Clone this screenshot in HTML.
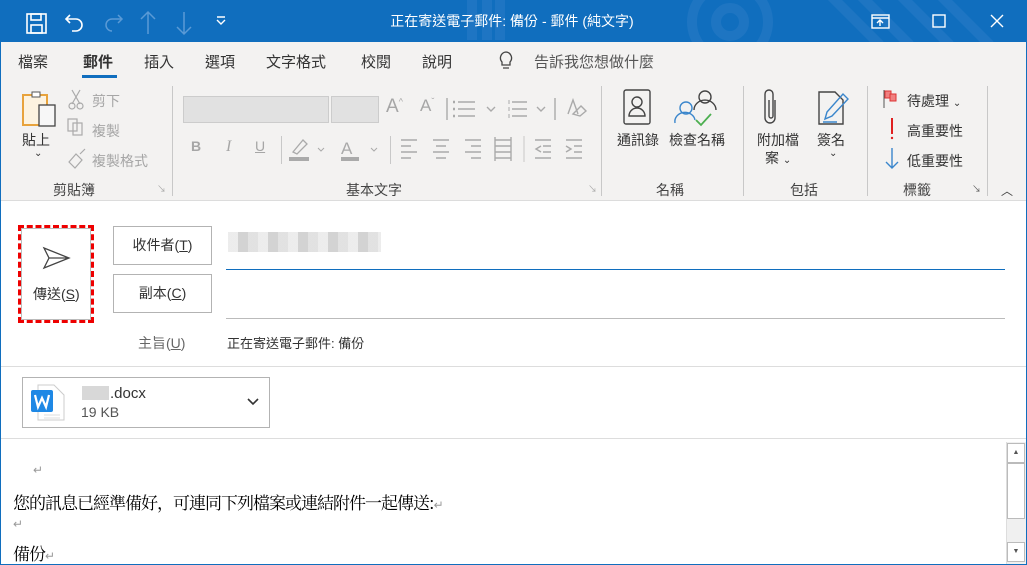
<!DOCTYPE html>
<html><head><meta charset="utf-8"><style>
*{margin:0;padding:0;box-sizing:border-box}
body{width:1027px;height:565px;overflow:hidden;background:#fff;font-family:"Liberation Sans","Noto Sans CJK TC",sans-serif;position:relative;color:#262626}
.a{position:absolute;white-space:nowrap}
#title{left:0;top:0;width:1027px;height:42px;background:#106ebe}
#frame{left:0;top:42px;width:1027px;height:523px;border:1px solid #106ebe;border-top:none}
#ribbon{left:1px;top:42px;width:1025px;height:159px;background:#f3f2f1;border-bottom:1px solid #dcdcdc}
.t{font-size:15px;color:#333}
.g{font-size:14px;color:#a6a6a6}
.d{font-size:14px;color:#333}
.lbl{font-size:14px;color:#444}
.sep{position:absolute;width:1px;background:#c8c8c8}
.box{position:absolute;border:1px solid #b3b3b3;background:#fff;font-size:14px;color:#333;text-align:center}
</style></head><body>
<div class="a" id="title"></div>
<svg class="a" style="left:0;top:0" width="1027" height="42">
<g stroke="#2a7cc6" stroke-width="10" fill="none" opacity=".55">
<circle cx="730" cy="22" r="14"/><circle cx="730" cy="22" r="38"/>
<path d="M830 -5 L880 45 M860 -5 L910 45 M900 -5 L950 45 M940 -5 L990 45"/>
<path d="M472 0 V40 M487 0 V40 M500 0 V40"/>
</g>
<g stroke="#fff" stroke-width="1.6" fill="none">
<rect x="27" y="14" width="19" height="19"/><rect x="31" y="14" width="10" height="6"/><rect x="31" y="25" width="11" height="8"/>
<path d="M70 15 L66 19 L70 23 M66 19 H76 A6 6 0 0 1 76 31 H72"/>
</g>
<g stroke="#5a9ad6" stroke-width="1.5" fill="none">
<path d="M118 15 L122 19 L118 23 M122 19 H112 A6 6 0 0 0 112 31"/>
<path d="M148 12 V34 M141 19 L148 12 L155 19"/><path d="M184 12 V34 M177 27 L184 34 L191 27"/>
</g>
<path d="M217 20 L221 24 L225 20 M217 17 H225" stroke="#fff" stroke-width="1.4" fill="none"/>
<g stroke="#fff" stroke-width="1.4" fill="none">
<rect x="872" y="15" width="17" height="13"/><path d="M872 18 H889 M880 26 V20 M877 23 L880 20 L883 23"/>
<rect x="933" y="15" width="12" height="12"/>
<path d="M991 15 L1003 27 M1003 15 L991 27"/>
</g>
<text x="512" y="26" fill="#fff" font-size="14" text-anchor="middle" font-family="Liberation Sans,Noto Sans CJK TC,sans-serif">正在寄送電子郵件: 備份  -  郵件 (純文字)</text>
</svg>
<div class="a" id="frame"></div>
<div class="a" id="ribbon"></div>
<div class="a t" style="left:18px;top:51px">檔案</div>
<div class="a t" style="left:83px;top:51px;font-weight:bold">郵件</div>
<div class="a" style="left:82px;top:75px;width:35px;height:3px;background:#106ebe"></div>
<div class="a t" style="left:144px;top:51px">插入</div>
<div class="a t" style="left:205px;top:51px">選項</div>
<div class="a t" style="left:266px;top:51px">文字格式</div>
<div class="a t" style="left:361px;top:51px">校閱</div>
<div class="a t" style="left:422px;top:51px">說明</div>
<svg class="a" style="left:498px;top:50px" width="16" height="22"><path d="M8 2 A6 6 0 0 1 12 12 V15 H4 V12 A6 6 0 0 1 8 2 Z M5 18 H11" stroke="#444" stroke-width="1.3" fill="none"/></svg>
<div class="a t" style="left:534px;top:51px;color:#555">告訴我您想做什麼</div>

<!-- clipboard -->
<svg class="a" style="left:20px;top:88px" width="40" height="40"><rect x="3" y="7" width="24" height="30" fill="#fdf3e0" stroke="#e8a33c" stroke-width="2"/><rect x="12" y="4" width="8" height="5" fill="#fff" stroke="#555"/><rect x="19" y="17" width="16" height="21" fill="#f7f7f7" stroke="#444" stroke-width="1.3"/></svg>
<div class="a d" style="left:22px;top:130px">貼上</div>
<div class="a d" style="left:34px;top:148px;font-size:10px">⌄</div>
<div class="a g" style="left:92px;top:91px">剪下</div>
<div class="a g" style="left:92px;top:121px">複製</div>
<div class="a g" style="left:92px;top:151px">複製格式</div>
<svg class="a" style="left:66px;top:88px" width="24" height="84" stroke="#aaa" fill="none" stroke-width="1.2"><path d="M6 2 L14 16 M14 2 L6 16"/><circle cx="6" cy="18" r="3"/><circle cx="14" cy="18" r="3"/><rect x="2" y="31" width="9" height="12"/><rect x="7" y="35" width="9" height="12"/><path d="M3 74 L10 66 L16 72 L9 80 Z M14 66 L19 61"/></svg>
<div class="a lbl" style="left:53px;top:180px">剪貼簿</div>
<div class="a g" style="left:157px;top:182px;font-size:9px">↘</div>
<div class="sep" style="left:172px;top:86px;height:110px"></div>

<!-- basic text -->
<div class="a" style="left:183px;top:96px;width:146px;height:27px;background:#e1e1e1;border:1px solid #ccc"></div>
<div class="a" style="left:331px;top:96px;width:48px;height:27px;background:#e1e1e1;border:1px solid #ccc"></div>
<div class="a g" style="left:386px;top:96px;font-size:19px">A<sup style="font-size:9px">^</sup></div>
<div class="a g" style="left:420px;top:96px;font-size:17px">A<sup style="font-size:9px">ˇ</sup></div>
<svg class="a" style="left:440px;top:88px" width="160" height="80" stroke="#aaa" fill="none" stroke-width="1.4">
<path d="M7 10 V32"/>
<path d="M18 14 H35 M18 21 H35 M18 28 H35" /><path d="M13 14 H15 M13 21 H15 M13 28 H15" stroke-width="2.5"/>
<path d="M47 19 L51 23 L55 19"/>
<path d="M72 14 H87 M72 21 H87 M72 28 H87"/><path d="M69 12 V16 M69 19 V23 M69 26 V30" stroke-width="1"/>
<path d="M97 19 L101 23 L105 19"/>
<path d="M115 10 V32"/>
<path d="M128 26 L133 12 L138 26 M133 26 L141 18 L146 23 L140 28 Z"/>
<path d="M-36 58 H-20 M-36 64 H-26 M-36 70 H-20 M-36 76 H-26" transform="translate(0,0)"/>
</svg>
<div class="a g" style="left:191px;top:138px;font-weight:bold">B</div>
<div class="a g" style="left:226px;top:138px;font-style:italic;font-family:'Liberation Serif',serif;font-size:16px">I</div>
<div class="a g" style="left:255px;top:138px;text-decoration:underline">U</div>
<div class="sep" style="left:281px;top:136px;height:28px"></div>
<svg class="a" style="left:289px;top:136px" width="100" height="26"><path d="M4 16 L14 4 L18 8 L8 18 Z" stroke="#aaa" fill="none" stroke-width="1.3"/><rect x="0" y="21" width="20" height="4" fill="#aaa"/><path d="M29 12 L32 15 L35 12" stroke="#aaa" fill="none"/><text x="52" y="18" font-size="17" fill="#aaa" font-family="Liberation Sans">A</text><rect x="52" y="21" width="18" height="4" fill="#aaa"/><path d="M82 12 L85 15 L88 12" stroke="#aaa" fill="none"/></svg>
<div class="sep" style="left:390px;top:136px;height:28px"></div>
<svg class="a" style="left:395px;top:134px" width="200" height="28" stroke="#aaa" fill="none" stroke-width="1.4">
<path d="M6 6 H22 M6 12 H16 M6 18 H22 M6 24 H16"/>
<path d="M38 6 H54 M41 12 H51 M38 18 H54 M41 24 H51"/>
<path d="M70 6 H86 M76 12 H86 M70 18 H86 M76 24 H86"/>
<path d="M100 6 H116 M100 12 H116 M100 18 H116 M100 24 H116 M100 3 V27 M116 3 V27"/>
<path d="M129 2 V28" stroke="#c8c8c8" stroke-width="1"/>
<path d="M140 6 H156 M148 12 H156 M148 18 H156 M140 24 H156 M146 12 L141 15 L146 18"/>
<path d="M171 6 H187 M179 12 H187 M179 18 H187 M171 24 H187 M171 12 L176 15 L171 18"/>
</svg>
<div class="a lbl" style="left:346px;top:180px">基本文字</div>
<div class="a g" style="left:588px;top:182px;font-size:9px">↘</div>
<div class="sep" style="left:601px;top:86px;height:110px"></div>

<!-- names -->
<svg class="a" style="left:622px;top:89px" width="100" height="40" fill="none" stroke-width="1.4"><rect x="2" y="1" width="26" height="34" rx="2" stroke="#444"/><circle cx="15" cy="13" r="5" stroke="#444"/><path d="M7 27 A8 8 0 0 1 23 27 Z" stroke="#444"/><circle cx="64" cy="19" r="6" stroke="#3a86cc"/><path d="M53 34 A10 9 0 0 1 73 31" stroke="#3a86cc"/><circle cx="83" cy="8" r="6" stroke="#444"/><path d="M72 21 A10 9 0 0 1 94 21" stroke="#444"/><path d="M74 31 L79 36 L89 25" stroke="#4caf50" stroke-width="1.8"/></svg>
<div class="a d" style="left:617px;top:130px">通訊錄</div>
<div class="a d" style="left:669px;top:130px">檢查名稱</div>
<div class="a lbl" style="left:656px;top:180px">名稱</div>
<div class="sep" style="left:743px;top:86px;height:110px"></div>

<!-- include -->
<svg class="a" style="left:755px;top:88px" width="100" height="40" fill="none" stroke-width="1.4"><path d="M20 12 V30 A5 5 0 0 1 10 30 V6 A4 4 0 0 1 18 6 V28 A2 2 0 0 1 14 28 V12" stroke="#444"/><path d="M64 4 H80 L88 12 V36 H64 Z" stroke="#444"/><path d="M70 31 L72 24 L88 6 L93 11 L77 28 Z M68 34 H82" stroke="#3a86cc"/></svg>
<div class="a d" style="left:757px;top:130px">附加檔</div>
<div class="a d" style="left:765px;top:148px">案 <span style="font-size:10px">⌄</span></div>
<div class="a d" style="left:817px;top:130px">簽名</div>
<div class="a d" style="left:829px;top:148px;font-size:10px">⌄</div>
<div class="a lbl" style="left:790px;top:180px">包括</div>
<div class="sep" style="left:867px;top:86px;height:110px"></div>

<!-- tags -->
<svg class="a" style="left:882px;top:88px" width="20" height="84"><path d="M2 2 V20" stroke="#555"/><rect x="3" y="3" width="6" height="7" fill="#f08080" stroke="#d33"/><rect x="8" y="6" width="6" height="7" fill="#f08080" stroke="#d33"/><path d="M10 30 V46" stroke="#e02020" stroke-width="2"/><circle cx="10" cy="50" r="1.2" fill="#e02020"/><path d="M10 60 V80 M4 74 L10 80 L16 74" stroke="#3a86cc" stroke-width="1.4" fill="none"/></svg>
<div class="a d" style="left:907px;top:91px">待處理 <span style="font-size:10px">⌄</span></div>
<div class="a d" style="left:907px;top:121px">高重要性</div>
<div class="a d" style="left:907px;top:151px">低重要性</div>
<div class="a lbl" style="left:903px;top:180px">標籤</div>
<div class="a g" style="left:972px;top:182px;font-size:9px;color:#555">↘</div>
<div class="sep" style="left:987px;top:86px;height:110px"></div>
<div class="a" style="left:1001px;top:182px;font-size:12px;color:#444">︿</div>

<!-- header fields -->
<div class="a" style="left:18px;top:225px;width:76px;height:98px;border:3px dashed #e00"></div>
<div class="a" style="left:21px;top:228px;width:70px;height:92px;border:1px solid #bbb"></div>
<svg class="a" style="left:42px;top:245px" width="30" height="26"><path d="M2 3 L27 13 L2 23 L7 13 Z M7 13 H27" stroke="#444" stroke-width="1.3" fill="none"/></svg>
<div class="a d" style="left:33px;top:284px">傳送(<u>S</u>)</div>
<div class="box" style="left:113px;top:226px;width:99px;height:39px;line-height:37px">收件者(<u>T</u>)</div>
<div class="box" style="left:113px;top:274px;width:99px;height:39px;line-height:37px">副本(<u>C</u>)</div>
<div class="a" style="left:228px;top:232px;width:153px;height:20px;background:repeating-linear-gradient(90deg,#e8e8e8 0 10px,#c8c8c8 10px 20px,#dadada 20px 30px);opacity:.8"></div>
<div class="a" style="left:226px;top:269px;width:779px;height:1px;background:#106ebe"></div>
<div class="a" style="left:226px;top:318px;width:779px;height:1px;background:#bbb"></div>
<div class="a d" style="left:138px;top:333px;color:#666">主旨(<u>U</u>)</div>
<div class="a d" style="left:227px;top:333px;font-size:13px">正在寄送電子郵件: 備份</div>
<div class="a" style="left:1px;top:366px;width:1025px;height:1px;background:#ddd"></div>

<div class="a" style="left:22px;top:377px;width:248px;height:51px;border:1px solid #b3b3b3;background:#fff"></div>
<svg class="a" style="left:30px;top:384px" width="36" height="38"><path d="M8 1 H24 L34 11 V36 H8 Z" fill="#fff" stroke="#ccc"/><rect x="1" y="6" width="22" height="22" rx="2" fill="#1e88e5"/><path d="M5 11 L8 23 L12 14 L16 23 L19 11" stroke="#fff" stroke-width="2.2" fill="none"/><path d="M14 31 H30 M14 34 H30" stroke="#ddd"/></svg>
<div class="a" style="left:82px;top:386px;width:27px;height:14px;background:#d8d8d8"></div>
<div class="a d" style="left:110px;top:385px;font-size:15px">.docx</div>
<div class="a d" style="left:81px;top:404px;font-size:14px;color:#555">19 KB</div>
<svg class="a" style="left:246px;top:397px" width="14" height="10"><path d="M2 2 L7 7 L12 2" stroke="#333" stroke-width="1.6" fill="none"/></svg>
<div class="a" style="left:1px;top:438px;width:1025px;height:1px;background:#ddd"></div>

<!-- body -->
<div class="a" style="left:33px;top:463px;font-size:12px;color:#999">↵</div>
<div class="a" style="left:13px;top:489px;font-size:17px;color:#000;font-family:'Noto Serif CJK SC','Liberation Serif',serif;letter-spacing:-1px">您的訊息已經準備好，可連同下列檔案或連結附件一起傳送:<span style="font-size:12px;color:#999">↵</span></div>
<div class="a" style="left:13px;top:517px;font-size:12px;color:#999">↵</div>
<div class="a" style="left:13px;top:540px;font-size:17px;color:#000;font-family:'Noto Serif CJK SC','Liberation Serif',serif;letter-spacing:-1px">備份<span style="font-size:12px;color:#999">↵</span></div>
<div class="a" style="left:1006px;top:442px;width:20px;height:122px;background:#f0f0f0;border-left:1px solid #ddd"></div>
<div class="a" style="left:1007px;top:443px;width:18px;height:20px;background:#fff;border:1px solid #bbb;font-size:7px;text-align:center;line-height:18px;color:#555">▲</div>
<div class="a" style="left:1007px;top:463px;width:18px;height:56px;background:#fff;border:1px solid #bbb"></div>
<div class="a" style="left:1007px;top:542px;width:18px;height:20px;background:#fff;border:1px solid #bbb;font-size:7px;text-align:center;line-height:18px;color:#555">▼</div>
</body></html>
